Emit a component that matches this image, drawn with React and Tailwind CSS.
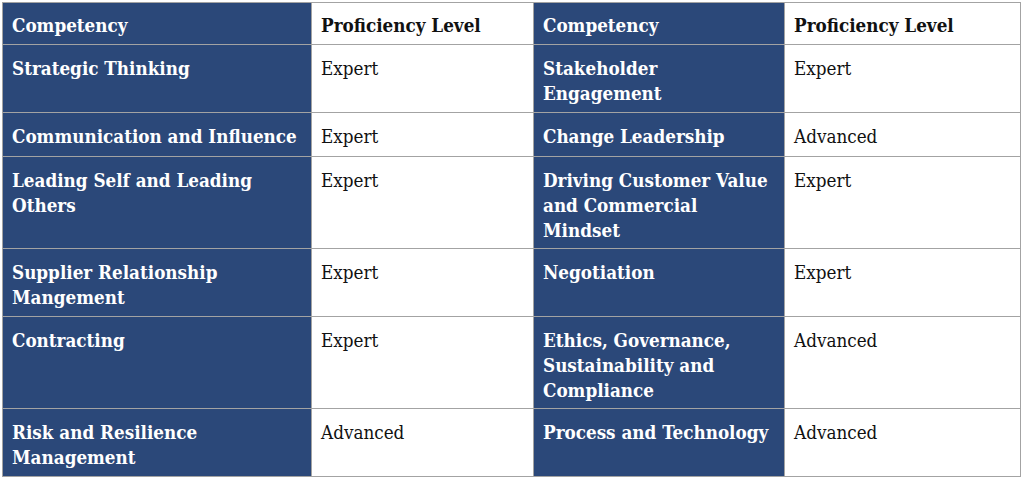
import React from 'react'

const rows = [
    { a: ['Strategic Thinking'], b: 'Expert', c: ['Stakeholder', 'Engagement'], d: 'Expert' },
    { a: ['Communication and Influence'], b: 'Expert', c: ['Change Leadership'], d: 'Advanced' },
    { a: ['Leading Self and Leading', 'Others'], b: 'Expert', c: ['Driving Customer Value', 'and Commercial', 'Mindset'], d: 'Expert' },
    { a: ['Supplier Relationship', 'Mangement'], b: 'Expert', c: ['Negotiation'], d: 'Expert' },
    { a: ['Contracting'], b: 'Expert', c: ['Ethics, Governance,', 'Sustainability and', 'Compliance'], d: 'Advanced' },
    { a: ['Risk and Resilience', 'Management'], b: 'Advanced', c: ['Process and Technology'], d: 'Advanced' },
]

function Lines({ lines }) {
    return lines.map((l, i) => (
        <React.Fragment key={i}>
            {i > 0 && <br />}
            {l}
        </React.Fragment>
    ))
}

export default function App() {
    const blue = 'bg-[#2b4879] text-white font-bold px-[9px] whitespace-nowrap'
    const white = 'bg-white text-[#111] px-[9px] whitespace-nowrap'

    return (
        <div className="w-[1024px] h-[481px] bg-white p-[2px]" style={{ fontFamily: '"DejaVu Serif Condensed", "DejaVu Serif", serif' }}>
            <div className="grid w-fit grid-cols-[308px_221px_250px_235px] grid-rows-[41px_67px_43px_91px_67px_91px_67px] gap-px p-px bg-[#a3a3a3] text-[18.7px] leading-[25px] [font-stretch:semi-condensed]">
                {/* header */}
                <div className={blue + ' pt-[10px]'}>Competency</div>
                <div className={white + ' pt-[10px] font-bold'}>Proficiency Level</div>
                <div className={blue + ' pt-[10px]'}>Competency</div>
                <div className={white + ' pt-[10px] font-bold'}>Proficiency Level</div>

                {rows.map((r, i) => (
                    <React.Fragment key={i}>
                        <div className={blue + ' pt-[11px]'}><Lines lines={r.a} /></div>
                        <div className={white + ' pt-[11px]'}>{r.b}</div>
                        <div className={blue + ' pt-[11px]'}><Lines lines={r.c} /></div>
                        <div className={white + ' pt-[11px]'}>{r.d}</div>
                    </React.Fragment>
                ))}
            </div>
        </div>
    )
}
